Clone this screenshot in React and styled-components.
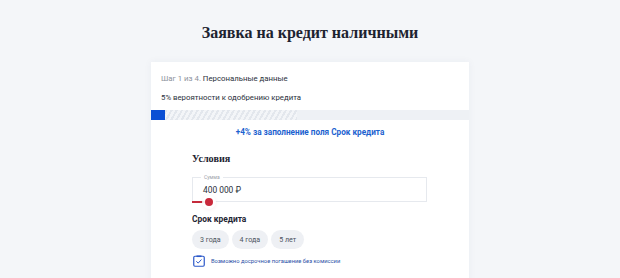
import React from "react";
import styled, { createGlobalStyle } from "styled-components";

const Global = createGlobalStyle`
  html, body { margin: 0; padding: 0; background: #f4f6f9; }
  body { font-family: Roboto, "Noto Sans", sans-serif; color: #1f2633; }
`;

const Page = styled.div`
  display: flex;
  flex-direction: column;
  align-items: center;
  padding-top: 22px;
  min-height: 278px;
  box-sizing: border-box;
`;

const Title = styled.h1`
  margin: 0;
  font-family: "Liberation Serif", serif;
  font-weight: 700;
  font-size: 16px;
  line-height: 22px;
  color: #1d2330;
`;

const Card = styled.div`
  margin-top: 18px;
  width: 318px;
  background: #fff;
  box-shadow: 0 0 8px rgba(30, 50, 90, 0.05);
  display: flex;
  flex-direction: column;
  padding-bottom: 20px;
`;

const Header = styled.div`
  padding: 11px 10px 0;
  display: flex;
  flex-direction: column;
  gap: 7px;
`;

const Line = styled.div`
  font-size: 7.8px;
  line-height: 12px;
  color: #2a303b;
`;

const Muted = styled.span`
  color: #8c929c;
`;

const Progress = styled.div`
  margin-top: 6px;
  height: 10px;
  background: #eef1f5;
  display: flex;
`;

const Fill = styled.div`
  width: 14px;
  background: #0b4fd4;
`;

const Stripes = styled.div`
  width: 132px;
  background: repeating-linear-gradient(
    -60deg,
    #e3e7ed 0 2px,
    #f3f5f8 2px 4.5px
  );
`;

const Bonus = styled.div`
  margin-top: 6px;
  text-align: center;
  font-size: 8.2px;
  line-height: 12px;
  font-weight: 700;
  color: #1c62cf;
`;

const Section = styled.div`
  padding: 0 42px 0 41px;
  display: flex;
  flex-direction: column;
`;

const SectionTitle = styled.h2`
  margin: 14px 0 0;
  font-family: "Liberation Serif", serif;
  font-size: 10.2px;
  line-height: 14px;
  font-weight: 700;
  color: #1d2330;
`;

const Field = styled.div`
  position: relative;
  margin-top: 11px;
  height: 25px;
  border: 1px solid #e6e9ee;
  box-sizing: border-box;
  display: flex;
  align-items: center;
  padding-left: 10px;
`;

const FieldLabel = styled.span`
  position: absolute;
  left: 8px;
  top: -4px;
  padding: 0 3px;
  background: #fff;
  font-size: 5px;
  line-height: 7px;
  color: #9aa0a8;
`;

const FieldValue = styled.span`
  font-size: 8.4px;
  color: #2a303b;
  margin-top: 1px;
`;

const Track = styled.div`
  position: absolute;
  left: -1px;
  bottom: -2px;
  width: 14px;
  height: 2px;
  background: #c52b3b;
`;

const Thumb = styled.div`
  position: absolute;
  left: 12px;
  bottom: -5px;
  width: 8px;
  height: 8px;
  border-radius: 50%;
  background: #c9283a;
  box-shadow: 0 0 0 3px rgba(255, 255, 255, 0.9), 0 1px 4px 2px rgba(200, 40, 60, 0.12);
`;

const Subtitle = styled.div`
  margin-top: 11px;
  font-size: 8.4px;
  line-height: 12px;
  font-weight: 700;
  color: #1f2633;
`;

const Chips = styled.div`
  margin-top: 5px;
  display: flex;
  gap: 3px;
`;

const Chip = styled.div`
  height: 19px;
  padding: 0 8px;
  border-radius: 10px;
  background: #eef0f4;
  display: flex;
  align-items: center;
  font-size: 7.1px;
  color: #4d5460;
`;

const Check = styled.div`
  margin-top: 6px;
  display: flex;
  align-items: center;
  gap: 6px;
  padding-left: 1px;
`;

const CheckText = styled.span`
  font-size: 5.8px;
  line-height: 10px;
  color: #2a4fa6;
`;

const CheckIcon = () => (
  <svg width="12" height="12" viewBox="0 0 12 12">
    <rect x="0.75" y="1.25" width="10.5" height="10" rx="1.2" fill="#fff" stroke="#2b58c9" strokeWidth="1.2" />
    <path d="M3.5 1.25 h5" stroke="#2b58c9" strokeWidth="1.6" />
    <path d="M3.6 6.6 L5.2 8.1 L8.2 4.8" fill="none" stroke="#2b58c9" strokeWidth="1" strokeLinecap="round" strokeLinejoin="round" />
  </svg>
);

export default function App() {
  return (
    <>
      <Global />
      <Page>
        <Title>Заявка на кредит наличными</Title>
        <Card>
          <Header>
            <Line>
              <Muted>Шаг 1 из 4.</Muted> Персональные данные
            </Line>
            <Line>5% вероятности к одобрению кредита</Line>
          </Header>
          <Progress>
            <Fill />
            <Stripes />
          </Progress>
          <Bonus>+4% за заполнение поля Срок кредита</Bonus>
          <Section>
            <SectionTitle>Условия</SectionTitle>
            <Field>
              <FieldLabel>Сумма</FieldLabel>
              <FieldValue>400 000 ₽</FieldValue>
              <Track />
              <Thumb />
            </Field>
            <Subtitle>Срок кредита</Subtitle>
            <Chips>
              <Chip>3 года</Chip>
              <Chip>4 года</Chip>
              <Chip>5 лет</Chip>
            </Chips>
            <Check>
              <CheckIcon />
              <CheckText>Возможно досрочное погашение без комиссии</CheckText>
            </Check>
          </Section>
        </Card>
      </Page>
    </>
  );
}
